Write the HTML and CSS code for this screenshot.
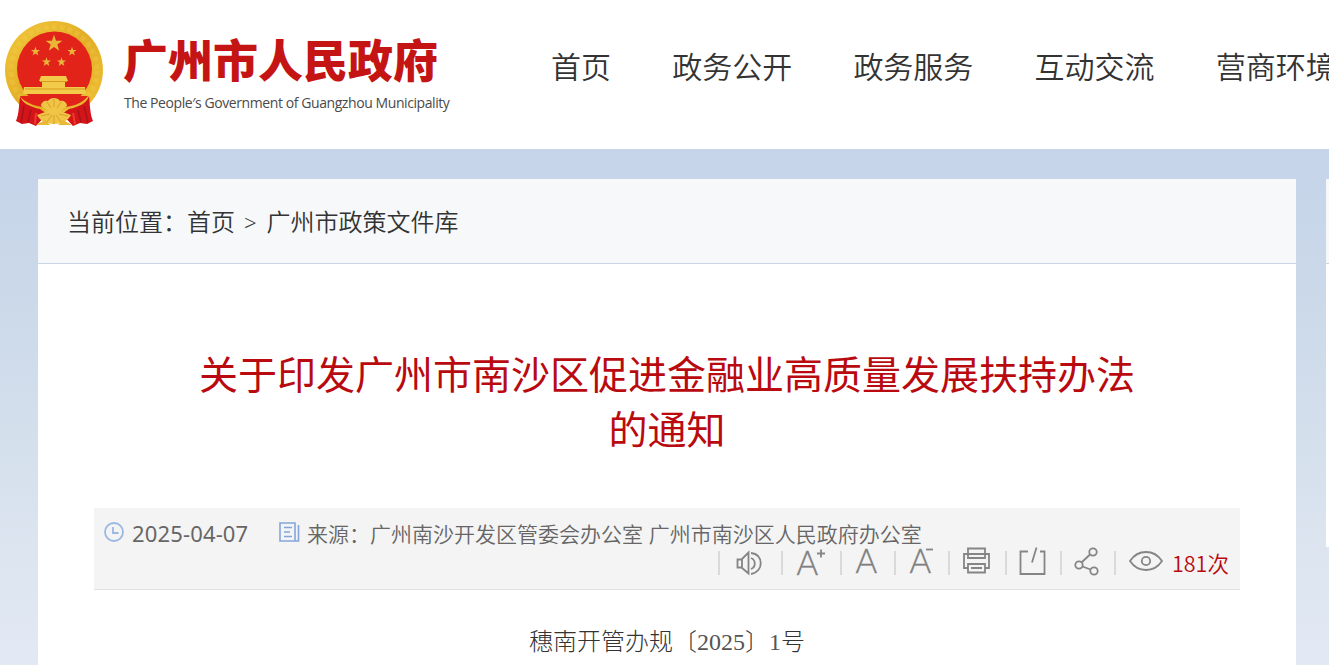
FILE: index.html
```html
<!DOCTYPE html>
<html lang="zh-CN">
<head>
    <meta charset="UTF-8">
    <meta name="viewport" content="width=device-width, initial-scale=1.0">
    <title>关于印发广州市南沙区促进金融业高质量发展扶持办法的通知</title>
    <link rel="stylesheet" href="styles.css">
</head>
<body>
    <header class="header">
        <div class="logo">
            <svg class="emblem" width="100" height="108" viewBox="0 0 100 108">
                <defs>
                    <linearGradient id="gold" x1="0" y1="0" x2="1" y2="1">
                        <stop offset="0" stop-color="#f3c93c"/>
                        <stop offset="0.5" stop-color="#e3ad26"/>
                        <stop offset="1" stop-color="#f0c136"/>
                    </linearGradient>
                    <polygon id="star" points="0,-10 2.3,-3.2 9.5,-3.1 3.8,1.2 5.9,8.1 0,4 -5.9,8.1 -3.8,1.2 -9.5,-3.1 -2.3,-3.2"/>
                </defs>
                <circle cx="49" cy="50" r="49" fill="url(#gold)"/>
                <circle cx="49" cy="50" r="43" fill="none" stroke="#f5d657" stroke-width="5" stroke-dasharray="5 3" opacity="0.25"/>
                <circle cx="49.500" cy="49" r="37.500" fill="#e2231a"/>
                <g fill="#e9b637">
                    <use href="#star" transform="translate(49 23.500) scale(.88)"/>
                    <use href="#star" transform="translate(30.500 31.500) scale(.48)"/>
                    <use href="#star" transform="translate(67 31.500) scale(.48)"/>
                    <use href="#star" transform="translate(41.500 42) scale(.48)"/>
                    <use href="#star" transform="translate(56.500 42) scale(.48)"/>
                </g>
                <path d="M36 56h25l2 5h-3v6h20l1 7H18l1-7h18v-6h-3z" fill="#f2cb4a"/>
                <path d="M35 61.500h27M20 69h60" stroke="#d99b1f"/>
                <path d="M15 76h68c-5 6-12 10-20 12H35c-9-2-16-6-20-12z" fill="#e2231a"/>
                <path d="M13 76c8 7 19 12 36 12s29-5 37-12l-5 14H18z" fill="url(#gold)"/>
                <path d="M15 76c2 7 10 11 20 13l7 5-11 12-7-3-7 1-6-3c3-7 3-16 4-25zM84 76c-2 7-10 11-20 13l-7 5 11 12 7-3 7 1 6-3c-3-7-3-16-4-25z" fill="#d3151a"/>
                <path d="M19 86l-3 17M26 90l-3 12M79 86l4 17M73 90l3 12" stroke="#a8131a" stroke-width="1.500"/>
                <path d="M31 93l-1 11M68 93l2 11" stroke="#ee3a2c" stroke-width="2"/>
                <path d="M36 86c0-4 4-6 7-5 2-4 10-4 12 0 4-1 7 2 7 5l-7 5 11 4c-3 6-10 9-17 9s-14-3-17-9l11-4z" fill="#f0c445"/>
                <path d="M42 82l4 6M49 79v8M56 82l-4 6M36 96l9-2M63 96l-9-2M42 102l5-7M56 102l-5-7M49 95v9" stroke="#dba02a"/>
                <path d="M31 105l9-5 5 5zM67 105l-9-5-5 5z" fill="#e8b936"/>
            </svg>
            <div class="logo-text">
                <strong>广州市人民政府</strong>
                <span>The People′s Government of Guangzhou Municipality</span>
            </div>
        </div>
        <nav class="nav">
            <a>首页</a>
            <a>政务公开</a>
            <a>政务服务</a>
            <a>互动交流</a>
            <a>营商环境</a>
        </nav>
    </header>

    <main class="main">
        <div class="article">
            <div class="crumbs">当前位置：<a>首页</a><i>&gt;</i><a>广州市政策文件库</a></div>
            <h1>关于印发广州市南沙区促进金融业高质量发展扶持办法<br>的通知</h1>
            <div class="meta">
                <div class="info">
                    <svg width="20" height="20" viewBox="0 0 20 20" fill="none" stroke="#9ab8e4" stroke-width="1.800">
                        <circle cx="10" cy="10" r="9"/>
                        <path d="M9 5v6h5.500"/>
                    </svg>
                    <span class="date">2025-04-07</span>
                    <svg class="source-icon" width="21" height="20" viewBox="0 0 21 20" fill="none" stroke="#84a5db" stroke-width="1.600">
                        <path d="M16 19H1V1h15v18h3.500V3M5 5.500h8M5 10h6M5 14.500h8"/>
                    </svg>
                    <span>来源：广州南沙开发区管委会办公室 广州市南沙区人民政府办公室</span>
                </div>
                <ul class="tools">
                    <li class="w63">
                        <svg width="52" height="32" viewBox="0 0 52 32">
                            <path d="M17.500 13.500h4l7-7v21l-7-6h-4zM22 13v9"/>
                            <path d="M31 12c5 2 5 9 0 11M31 7c13 1 13 19 0 21"/>
                        </svg>
                    </li>
                    <li class="w59">
                        <svg width="52" height="32" viewBox="0 0 52 32">
                            <text x="13.500" y="28.500">A</text>
                            <path d="M34 7.500h8M38 3.500v8"/>
                        </svg>
                    </li>
                    <li class="w54">
                        <svg width="50" height="32" viewBox="0 0 50 32">
                            <text x="13.500" y="27">A</text>
                        </svg>
                    </li>
                    <li class="w54">
                        <svg width="50" height="32" viewBox="0 0 50 32">
                            <text x="13.500" y="27">A</text>
                            <path d="M30 3.500h7"/>
                        </svg>
                    </li>
                    <li class="w57">
                        <svg width="52" height="32" viewBox="0 0 52 32">
                            <path d="M18 8V2.500h17V8M18 22h-4V8h25v14h-4M18 18h17v8.500H18zM21 22h11M18 8v4h17V8"/>
                        </svg>
                    </li>
                    <li class="w55">
                        <svg width="50" height="32" viewBox="0 0 50 32">
                            <path d="M21 5.500h-7.500v22.500h24V5.500H33M29.500 1.500l-4.500 15"/>
                        </svg>
                    </li>
                    <li class="w54">
                        <svg width="50" height="32" viewBox="0 0 50 32">
                            <circle cx="31" cy="6" r="3.700"/>
                            <circle cx="17" cy="19" r="3.700"/>
                            <circle cx="32" cy="25" r="3.700"/>
                            <path d="M28 8.500l-8.500 8M20.500 20.500l8 3"/>
                        </svg>
                    </li>
                    <li class="views">
                        <svg width="56" height="32" viewBox="0 0 56 32">
                            <path d="M14 15c8-12 24-12 32 0-8 12-24 12-32 0z"/>
                            <circle cx="30" cy="15" r="4.200"/>
                        </svg>
                        <b>181次</b>
                    </li>
                </ul>
            </div>
            <p class="doc-no">穗南开管办规〔<em>2025</em>〕<em>1</em>号</p>
        </div>
        <aside class="side"><div class="side-head"></div></aside>
    </main>
</body>
</html>
```
FILE: styles.css
```css
* {
    margin: 0;
    padding: 0;
    box-sizing: border-box;
}
body {
    height: 665px;
    overflow: hidden;
    background: #fff;
    color: #333;
    font-family: "Noto Sans CJK SC", sans-serif;
    font-weight: 350;
}
i, em {
    font-style: normal;
}

/* Header */
.header {
    display: flex;
    height: 149px;
    overflow: hidden;
}
.logo {
    display: flex;
    flex: none;
    width: 552px;
    padding: 20px 0 0 5px;
}
.logo-text {
    display: flex;
    flex-direction: column;
    padding: 12px 0 0 18px;
    white-space: nowrap;
}
.logo-text strong {
    font-size: 45px;
    font-weight: 900;
    line-height: 54px;
    color: #c41414;
}
.logo-text span {
    font-family: "Open Sans", sans-serif;
    font-size: 14px;
    font-weight: 500;
    letter-spacing: -0.42px;
    line-height: 20px;
    padding: 7px 0 0 1px;
    color: #4a4a4a;
}
.nav {
    display: flex;
    gap: 61.2px;
    padding-top: 43px;
    font-size: 30px;
    line-height: 44px;
    white-space: nowrap;
}
.nav a {
    position: relative;
    left: -1px;
    flex: none;
}

/* Content */
.main {
    display: flex;
    gap: 30px;
    height: 516px;
    padding: 30px 0 0 38px;
    background: linear-gradient(#c5d4e9, #cbd9e9 30%, #dbe4ef 75%, #e2e9f4);
    overflow: hidden;
}
.article {
    flex: none;
    width: 1258px;
    height: 600px;
    background: #fff;
}
.crumbs {
    height: 85px;
    padding-left: 29px;
    border-bottom: 1px solid #c9d5e3;
    background: #f6f8fa;
    font-size: 24px;
    line-height: 84px;
}
.crumbs i {
    margin: 0 10px 0 9px;
    font-family: "Open Sans", sans-serif;
    font-size: 22px;
}
h1 {
    padding-top: 81px;
    text-align: center;
    font-size: 39px;
    font-weight: 400;
    line-height: 55px;
    color: #b90a0f;
    white-space: nowrap;
}
.meta {
    width: 1146px;
    height: 82px;
    margin: 53px 0 0 56px;
    padding: 10px 10px 0;
    border-bottom: 1px solid #e0e0e0;
    background: #f4f4f4;
}
.info {
    display: flex;
    align-items: center;
    height: 28px;
    font-size: 21px;
    color: #666;
    white-space: nowrap;
}
.info svg {
    margin-top: -1px;
}
.info span {
    padding-top: 1px;
    word-spacing: 1px;
}
.date {
    width: 147px;
    margin-left: 8px;
    font-family: "Noto Sans", sans-serif;
    font-size: 22px;
    font-weight: 400;
    letter-spacing: 0.15px;
}
.source-icon {
    margin-right: 7px;
}

/* Toolbar */
.tools {
    display: flex;
    justify-content: flex-end;
    height: 32px;
    list-style: none;
}
.tools li {
    flex: none;
    background: linear-gradient(#dadada, #dadada) 0 5px / 2px 24px no-repeat;
}
.tools svg {
    display: block;
    margin-left: 2px;
    overflow: visible;
    fill: none;
    stroke: #858585;
    stroke-width: 1.8;
}
.tools text {
    fill: #808080;
    stroke: #808080;
    stroke-width: 0.4;
    font-family: Lato, sans-serif;
    font-size: 33px;
    font-weight: 300;
}
.w54 { width: 54px; }
.w55 { width: 55px; }
.w57 { width: 57px; }
.w59 { width: 59px; }
.w63 { width: 63px; }
.tools .views {
    display: flex;
    width: 116px;
}
.views b {
    font-size: 21.5px;
    font-weight: 350;
    line-height: 34px;
    color: #b90a0f;
    white-space: nowrap;
}
.doc-no {
    margin-top: 34px;
    text-align: center;
    font-family: "Liberation Serif", "Noto Sans CJK SC", serif;
    font-size: 24px;
    font-weight: 300;
    line-height: 36px;
}
.doc-no em {
    color: #555;
}

/* Right column */
.side {
    flex: none;
    width: 380px;
    height: 368px;
    background: #fff;
}
.side-head {
    height: 85px;
    border-bottom: 1px solid #c9d5e3;
    background: #f6f8fa;
}
```
